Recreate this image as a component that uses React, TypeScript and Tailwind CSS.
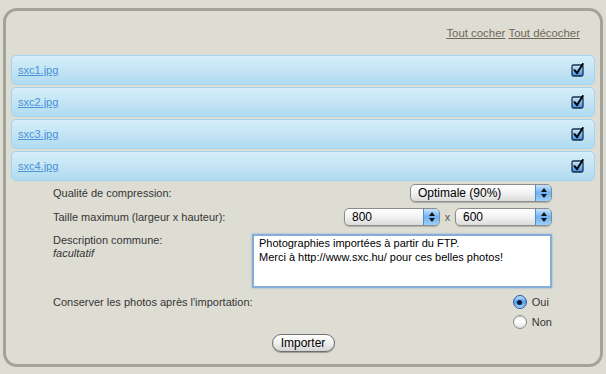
const font = { fontFamily: '"Liberation Sans", Arial, sans-serif' };

const CheckIcon = () => (
  <svg width="14" height="14" viewBox="0 0 14 14">
    <defs>
      <linearGradient id="cb" x1="0" y1="0" x2="0" y2="1">
        <stop offset="0" stopColor="#d6ecff" />
        <stop offset="0.5" stopColor="#7fbdf2" />
        <stop offset="1" stopColor="#3f8ee0" />
      </linearGradient>
    </defs>
    <rect x="1" y="2" width="11" height="11" rx="1.5" fill="url(#cb)" stroke="#1c2b4e" strokeWidth="1.3" />
    <path d="M3.5 7.2 L6 10.2 L11.8 1" fill="none" stroke="#000" strokeWidth="2" strokeLinecap="round" strokeLinejoin="round" />
  </svg>
);

const Select = ({ value, width }: { value: string; width: string }) => (
  <div
    className={`${width} h-[18px] flex rounded-[5px] border border-[#8c8c8c] bg-gradient-to-b from-white via-[#f2f2f2] to-[#dcdcdc] shadow-[0_1px_1px_rgba(0,0,0,0.2)] overflow-hidden`}
  >
    <div className="flex-1 pl-[7px] text-[12px] leading-[16px] text-black">{value}</div>
    <div className="w-[16px] h-full flex flex-col items-center justify-center gap-[2px] border-l border-[#5d88c4] bg-gradient-to-b from-[#c6e2fd] via-[#6eb1f4] to-[#9fd0fb]">
      <svg width="6" height="4" viewBox="0 0 6 4"><path d="M0 4 L3 0 L6 4 Z" fill="#111" /></svg>
      <svg width="6" height="4" viewBox="0 0 6 4"><path d="M0 0 L3 4 L6 0 Z" fill="#111" /></svg>
    </div>
  </div>
);

const Radio = ({ checked }: { checked?: boolean }) =>
  checked ? (
    <div className="w-[14px] h-[14px] rounded-full border border-[#31559a] bg-gradient-to-b from-[#bfe0ff] via-[#4f9bea] to-[#a6d4fb] flex items-center justify-center">
      <div className="w-[5px] h-[5px] rounded-full bg-[#0f1a33]" />
    </div>
  ) : (
    <div className="w-[14px] h-[14px] rounded-full border border-[#8a8a8a] bg-gradient-to-b from-[#f4f4f4] via-white to-[#dedede] shadow-[inset_0_1px_1px_rgba(0,0,0,0.15)]" />
  );

const files = ["sxc1.jpg", "sxc2.jpg", "sxc3.jpg", "sxc4.jpg"];

const App = () => {
  return (
    <div className="w-[606px] h-[374px] bg-[#deddd4] pt-[8px] px-[3px] text-[11px]" style={font}>
      <div className="h-[359px] border-[3px] border-[#a4a39a] rounded-[14px] px-[5px]">
        {/* Header links */}
        <div className="pt-[16px] flex justify-end pr-[15px] leading-[13px] text-[11.4px] text-[#6f6757]">
          <a className="underline">Tout cocher</a>
          <span>&nbsp;</span>
          <a className="underline">Tout décocher</a>
        </div>

        {/* File rows */}
        <div className="mt-[15px] flex flex-col gap-[2px]">
          {files.map((f) => (
            <div
              key={f}
              className="h-[30px] flex items-center justify-between pl-[6px] pr-[9px] rounded-[5px] border border-[#a3d3ef] bg-gradient-to-b from-[#d6eef9] to-[#b1dbf1]"
            >
              <a className="underline text-[#4a94d6]">{f}</a>
              <CheckIcon />
            </div>
          ))}
        </div>

        {/* Options */}
        <div className="pl-[42px] pr-[43px] pt-[3px] text-[#353535]">
          <div className="h-[18px] flex items-center justify-between">
            <span>Qualité de compression:</span>
            <Select value="Optimale (90%)" width="w-[142px]" />
          </div>
          <div className="mt-[6px] h-[18px] flex items-center justify-between">
            <span>Taille maximum (largeur x hauteur):</span>
            <div className="flex items-center">
              <Select value="800" width="w-[96px]" />
              <span className="w-[15px] text-center text-[#555]">x</span>
              <Select value="600" width="w-[97px]" />
            </div>
          </div>
          <div className="mt-[8px] flex items-start justify-between">
            <div className="leading-[13px]">
              <div>Description commune:</div>
              <div className="italic">facultatif</div>
            </div>
            <div className="w-[300px] h-[54px] border-2 border-[#86acd9] bg-white px-[5px] py-[0px] text-black leading-[14px] shadow-[0_0_2px_rgba(80,140,210,0.6)]">
              Photographies importées à partir du FTP.
              <br />
              Merci à http://www.sxc.hu/ pour ces belles photos!
            </div>
          </div>
          <div className="mt-[7px] flex items-start justify-between">
            <span className="leading-[14px]">Conserver les photos après l'importation:</span>
            <div className="flex flex-col gap-[6px]">
              <div className="flex items-center gap-[5px] h-[14px] leading-[14px]">
                <Radio checked />
                <span>Oui</span>
              </div>
              <div className="flex items-center gap-[5px] h-[14px] leading-[14px]">
                <Radio />
                <span>Non</span>
              </div>
            </div>
          </div>
        </div>

        <div className="mt-[5px] flex justify-center">
          <button className="w-[63px] h-[18px] rounded-full border border-[#6f6f6f] bg-gradient-to-b from-white via-[#f0f0f0] to-[#d4d4d4] text-[12px] leading-[16px] text-black shadow-[0_1px_1px_rgba(0,0,0,0.3)]">
            Importer
          </button>
        </div>
      </div>
    </div>
  );
};

export default App;
